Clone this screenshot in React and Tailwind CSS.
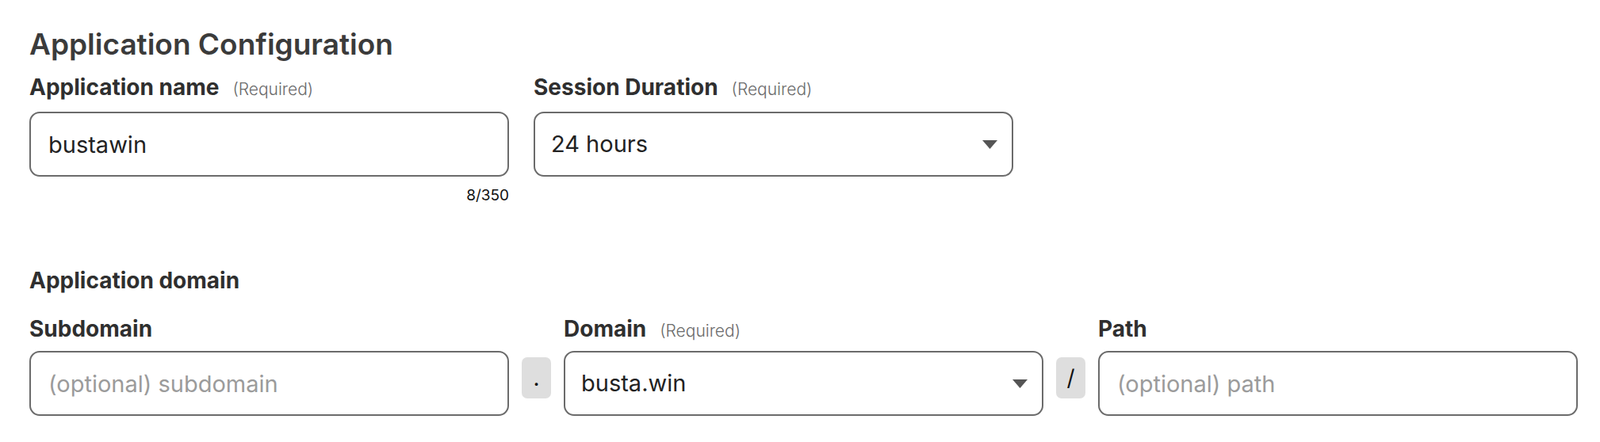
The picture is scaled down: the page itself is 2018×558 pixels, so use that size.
import React from 'react';

function Label({ text, required }) {
  return (
    <div className="flex items-baseline gap-[17px] h-[32px]">
      <span className="text-[28px] leading-[32px] font-bold text-[#2f2f2f]">{text}</span>
      {required && <span className="text-[21px] font-light text-[#6b6b6b]">(Required)</span>}
    </div>
  );
}

function TextBox({ value, placeholder }) {
  return (
    <input
      readOnly
      value={value}
      placeholder={placeholder}
      className="w-[605px] h-[82px] rounded-[13px] border-2 border-[#6b6b6b] px-[22px] text-[29px] text-[#222] placeholder:text-[#9b9b9b] outline-none bg-white"
    />
  );
}

function SelectBox({ value }) {
  return (
    <div className="w-[605px] h-[82px] rounded-[13px] border-2 border-[#6b6b6b] pl-[20px] pr-[18px] flex items-center justify-between bg-white">
      <span className="text-[29px] text-[#222]">{value}</span>
      <svg width="19" height="11" viewBox="0 0 19 11">
        <path d="M0 0 H19 L9.5 11 Z" fill="#555" />
      </svg>
    </div>
  );
}

function Sep({ char }) {
  return (
    <div className="mt-[8px] mx-[16px] w-[37px] h-[52px] rounded-[7px] bg-[#dedede] flex items-center justify-center text-[28px] text-[#111]">
      {char}
    </div>
  );
}

export default function App() {
  return (
    <div className="min-h-[558px] bg-white pl-[37px] pt-[36px] font-['Inter',sans-serif]">
      <h1 className="text-[37px] leading-[40px] font-semibold text-[#3b3b3b]">Application Configuration</h1>

      <div className="flex gap-[31px] mt-[18px]">
        <div className="w-[605px]">
          <Label text="Application name" required />
          <div className="mt-[15px]">
            <TextBox value="bustawin" />
          </div>
          <div className="mt-[12px] text-right text-[19px] leading-[24px] text-[#111]">8/350</div>
        </div>
        <div className="w-[605px]">
          <Label text="Session Duration" required />
          <div className="mt-[15px]">
            <SelectBox value="24 hours" />
          </div>
        </div>
      </div>

      <div className="mt-[79px]">
        <Label text="Application domain" />
      </div>

      <div className="flex items-start mt-[29px]">
        <div>
          <Label text="Subdomain" />
          <div className="mt-[12px]">
            <TextBox placeholder="(optional) subdomain" />
          </div>
        </div>
        <div className="pt-[44px]">
          <Sep char="." />
        </div>
        <div>
          <Label text="Domain" required />
          <div className="mt-[12px]">
            <SelectBox value="busta.win" />
          </div>
        </div>
        <div className="pt-[44px]">
          <Sep char="/" />
        </div>
        <div>
          <Label text="Path" />
          <div className="mt-[12px]">
            <TextBox placeholder="(optional) path" />
          </div>
        </div>
      </div>
    </div>
  );
}
